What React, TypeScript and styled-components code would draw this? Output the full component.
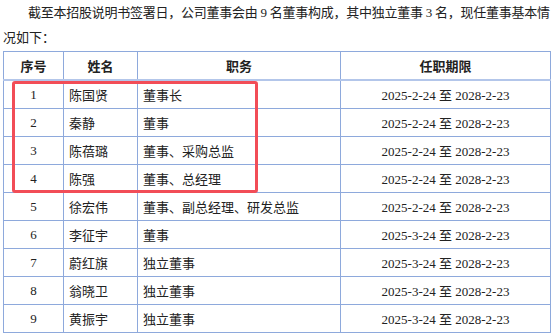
import React from 'react';
import styled, { createGlobalStyle } from 'styled-components';

const GlobalStyle = createGlobalStyle`
  html, body {
    margin: 0;
    padding: 0;
    background: #ffffff;
  }
  body {
    width: 554px;
    height: 336px;
    overflow: hidden;
    font-family: "Liberation Serif", "Noto Sans CJK SC", serif;
    color: #222222;
  }
`;

const Page = styled.div`
  position: relative;
  width: 554px;
  height: 336px;
`;

const Intro = styled.p`
  margin: 0;
  padding: 0 0 0 3px;
  font-size: 13px;
  line-height: 25px;
  white-space: nowrap;
`;

const FirstLine = styled.span`
  display: block;
  padding-left: 25px;
  letter-spacing: -0.25px;
`;

const Table = styled.table`
  margin: 1px 0 0 3px;
  width: 547px;
  border-collapse: collapse;
  table-layout: fixed;
  font-size: 13px;
`;

const HeadCell = styled.th`
  height: 27px;
  padding: 0;
  border: 1px solid #8ea9dc;
  border-bottom: 2px solid #b3c6ea;
  font-weight: bold;
  text-align: center;
  vertical-align: middle;
`;

const Cell = styled.td<{ $align?: 'left' | 'center' }>`
  height: 27px;
  padding: 0 0 0 ${(p) => (p.$align === 'left' ? '5px' : '0')};
  border: 1px solid #8ea9dc;
  text-align: ${(p) => p.$align ?? 'center'};
  vertical-align: middle;
  white-space: nowrap;
`;

// red annotation frame drawn over the first four rows
const Highlight = styled.div`
  position: absolute;
  left: 12px;
  top: 81px;
  width: 240px;
  height: 106px;
  border: 3px solid #f24d57;
  border-radius: 3px;
  pointer-events: none;
`;

type Director = {
  no: number;
  name: string;
  role: string;
  term: string;
};

const directors: Director[] = [
  { no: 1, name: '陈国贤', role: '董事长', term: '2025-2-24 至 2028-2-23' },
  { no: 2, name: '秦静', role: '董事', term: '2025-2-24 至 2028-2-23' },
  { no: 3, name: '陈蓓璐', role: '董事、采购总监', term: '2025-2-24 至 2028-2-23' },
  { no: 4, name: '陈强', role: '董事、总经理', term: '2025-2-24 至 2028-2-23' },
  { no: 5, name: '徐宏伟', role: '董事、副总经理、研发总监', term: '2025-2-24 至 2028-2-23' },
  { no: 6, name: '李征宇', role: '董事', term: '2025-3-24 至 2028-2-23' },
  { no: 7, name: '蔚红旗', role: '独立董事', term: '2025-3-24 至 2028-2-23' },
  { no: 8, name: '翁晓卫', role: '独立董事', term: '2025-3-24 至 2028-2-23' },
  { no: 9, name: '黄振宇', role: '独立董事', term: '2025-3-24 至 2028-2-23' },
];

export default function App() {
  return (
    <Page>
      <GlobalStyle />
      <Intro>
        <FirstLine>
          截至本招股说明书签署日，公司董事会由 9 名董事构成，其中独立董事 3 名，现任董事基本情
        </FirstLine>
        况如下：
      </Intro>
      <Table>
        <colgroup>
          <col style={{ width: 60 }} />
          <col style={{ width: 74 }} />
          <col style={{ width: 203 }} />
          <col style={{ width: 210 }} />
        </colgroup>
        <thead>
          <tr>
            <HeadCell>序号</HeadCell>
            <HeadCell>姓名</HeadCell>
            <HeadCell>职务</HeadCell>
            <HeadCell>任职期限</HeadCell>
          </tr>
        </thead>
        <tbody>
          {directors.map((d) => (
            <tr key={d.no}>
              <Cell>{d.no}</Cell>
              <Cell $align="left">{d.name}</Cell>
              <Cell $align="left">{d.role}</Cell>
              <Cell>{d.term}</Cell>
            </tr>
          ))}
        </tbody>
      </Table>
      <Highlight />
    </Page>
  );
}
